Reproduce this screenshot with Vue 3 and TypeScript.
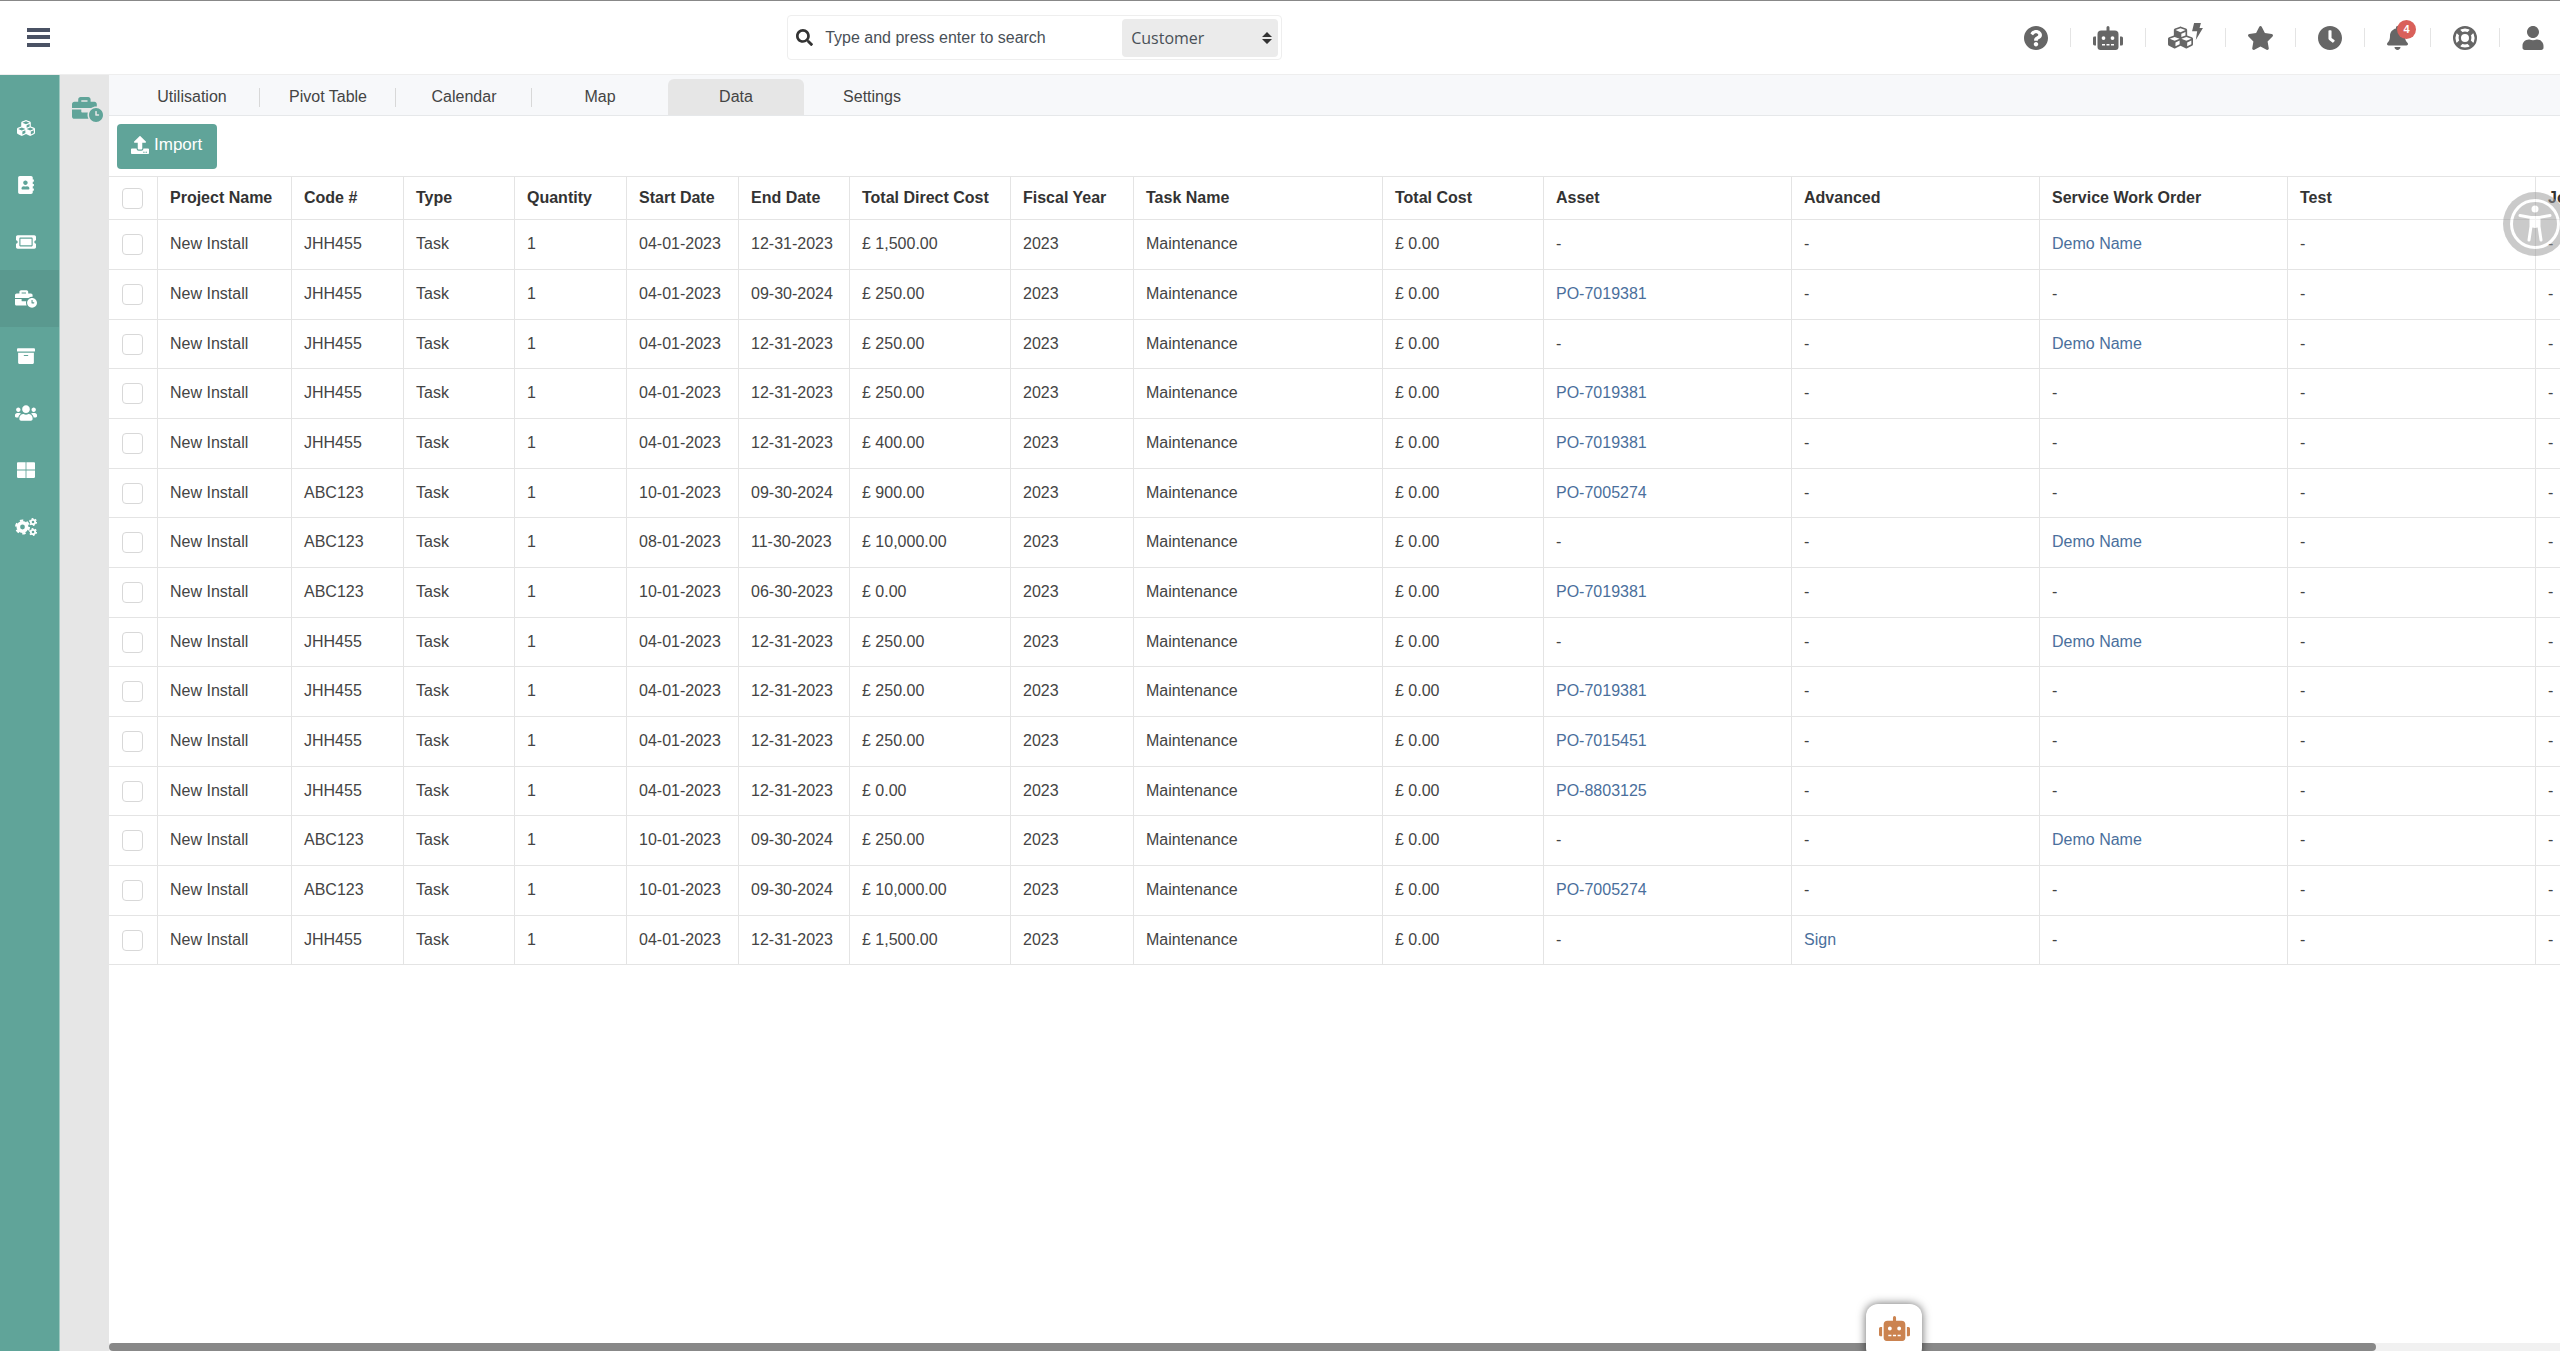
<script setup lang="ts">
import { ref } from 'vue'

interface Glyph {
  box: string
  d: string
}

interface Action {
  label: string
  icon: string
  width: number
  extra?: string
  badge?: number
}

interface Column {
  title: string
  width: number
}

interface Row {
  code: string
  start: string
  end: string
  direct: string
  asset?: string
  advanced?: string
  order?: string
}

const glyphs: Record<string, Glyph> = {
  help: {
    box: '8 8 496 496',
    d: 'M504 256c0 136.997-111.043 248-248 248S8 392.997 8 256C8 119.083 119.043 8 256 8s248 111.083 248 248zM262.655 90c-54.497 0-89.255 22.957-116.549 63.758-3.536 5.286-2.353 12.415 2.715 16.258l34.699 26.31c5.205 3.947 12.621 3.008 16.665-2.122 17.864-22.658 30.113-35.797 57.303-35.797 20.429 0 45.698 13.148 45.698 32.958 0 14.976-12.363 22.667-32.534 33.976C247.128 238.528 216 254.941 216 296v4c0 6.627 5.373 12 12 12h56c6.627 0 12-5.373 12-12v-1.333c0-28.462 83.186-29.647 83.186-106.667 0-58.002-60.165-102-116.531-102zM256 338c-25.365 0-46 20.635-46 46 0 25.364 20.635 46 46 46s46-20.636 46-46c0-25.365-20.635-46-46-46z',
  },
  robot: {
    box: '0 0 640 512',
    d: 'M32,224H64V416H32A31.96166,31.96166,0,0,1,0,384V256A31.96166,31.96166,0,0,1,32,224Zm512-48V448a64.06328,64.06328,0,0,1-64,64H160a64.06328,64.06328,0,0,1-64-64V176a79.974,79.974,0,0,1,80-80H288V32a32,32,0,0,1,64,0V96H464A79.974,79.974,0,0,1,544,176ZM264,256a40,40,0,1,0-40,40A39.997,39.997,0,0,0,264,256Zm-8,128H192v32h64Zm96,0H288v32h64ZM456,256a40,40,0,1,0-40,40A39.997,39.997,0,0,0,456,256Zm-8,128H384v32h64ZM640,256V384a31.96166,31.96166,0,0,1-32,32H576V224h32A31.96166,31.96166,0,0,1,640,256Z',
  },
  cubes: {
    box: '0 0 512 512',
    d: 'M488.6 250.2L392 214V105.5c0-15-9.3-28.4-23.4-33.7l-100-37.5c-8.1-3.1-17.1-3.1-25.3 0l-100 37.5c-14.1 5.3-23.4 18.7-23.4 33.7V214l-96.6 36.2C9.3 255.5 0 268.9 0 283.9V394c0 13.6 7.7 26.1 19.9 32.2l100 50c10.1 5.1 22.1 5.1 32.2 0l103.9-52 103.9 52c10.1 5.1 22.1 5.1 32.2 0l100-50c12.2-6.1 19.9-18.6 19.9-32.2V283.9c0-15-9.3-28.4-23.4-33.7zM358 214.8l-85 31.9v-68.2l85-37v73.3zM154 104.1l102-38.2 102 38.2v.6l-102 41.4-102-41.4v-.6zm84 291.1l-85 42.5v-79.1l85-38.8v75.4zm0-112l-102 41.4-102-41.4v-.6l102-38.2 102 38.2v.6zm240 112l-85 42.5v-79.1l85-38.8v75.4zm0-112l-102 41.4-102-41.4v-.6l102-38.2 102 38.2v.6z',
  },
  bolt: {
    box: '0 0 32 50',
    d: 'M6 0h20l-4 15h10L11 50l4-26H0z',
  },
  star: {
    box: '20 0 536 512',
    d: 'M259.3 17.8L194 150.2 47.9 171.5c-26.2 3.8-36.7 36.1-17.7 54.6l105.7 103-25 145.5c-4.5 26.3 23.2 46 46.4 33.7L288 439.6l130.7 68.7c23.2 12.2 50.9-7.4 46.4-33.7l-25-145.5 105.7-103c19-18.5 8.5-50.8-17.7-54.6L382 150.2 316.7 17.8c-11.7-23.6-45.6-23.9-57.4 0z',
  },
  clock: {
    box: '8 8 496 496',
    d: 'M256,8C119,8,8,119,8,256S119,504,256,504,504,393,504,256,393,8,256,8Zm92.49,313h0l-20,25a16,16,0,0,1-22.49,2.5h0l-67-49.72a40,40,0,0,1-15-31.23V112a16,16,0,0,1,16-16h32a16,16,0,0,1,16,16V256l58,42.5A16,16,0,0,1,348.49,321Z',
  },
  bell: {
    box: '0 0 448 512',
    d: 'M224 512c35.32 0 63.97-28.65 63.97-64H160.03c0 35.35 28.65 64 63.97 64zm215.39-149.71c-19.32-20.76-55.47-51.99-55.47-154.29 0-77.7-54.48-139.9-127.94-155.16V32c0-17.67-14.32-32-31.98-32s-31.98 14.33-31.98 32v20.84C118.56 68.1 64.08 130.3 64.08 208c0 102.3-36.15 133.53-55.47 154.29-6 6.45-8.66 14.16-8.61 21.71.11 16.4 12.98 32 32.1 32h383.8c19.12 0 32-15.6 32.1-32 .05-7.55-2.61-15.27-8.61-21.71z',
  },
  user: {
    box: '0 0 448 512',
    d: 'M224 256c70.7 0 128-57.3 128-128S294.7 0 224 0 96 57.3 96 128s57.3 128 128 128zm89.6 32h-16.7c-22.2 10.2-46.9 16-72.9 16s-50.6-5.8-72.9-16h-16.7C60.2 288 0 348.2 0 422.4V464c0 26.5 21.5 48 48 48h352c26.5 0 48-21.5 48-48v-41.6c0-74.2-60.2-134.4-134.4-134.4z',
  },
  search: {
    box: '0 0 512 512',
    d: 'M505 442.7L405.3 343c-4.5-4.5-10.6-7-17-7H372c27.6-35.3 44-79.7 44-128C416 93.1 322.9 0 208 0S0 93.1 0 208s93.1 208 208 208c48.3 0 92.7-16.4 128-44v16.3c0 6.4 2.5 12.5 7 17l99.7 99.7c9.4 9.4 24.6 9.4 33.9 0l28.3-28.3c9.4-9.4 9.4-24.6.1-34zM208 336c-70.7 0-128-57.2-128-128 0-70.7 57.2-128 128-128 70.7 0 128 57.2 128 128 0 70.7-57.2 128-128 128z',
  },
  contacts: {
    box: '0 0 448 512',
    d: 'M436 160c6.6 0 12-5.4 12-12v-40c0-6.6-5.4-12-12-12h-20V48c0-26.5-21.5-48-48-48H48C21.5 0 0 21.5 0 48v416c0 26.5 21.5 48 48 48h320c26.5 0 48-21.5 48-48v-48h20c6.6 0 12-5.4 12-12v-40c0-6.6-5.4-12-12-12h-20v-64h20c6.6 0 12-5.4 12-12v-40c0-6.6-5.4-12-12-12h-20v-64h20zm-228-32c35.3 0 64 28.7 64 64s-28.7 64-64 64-64-28.7-64-64 28.7-64 64-64zm112 236.8c0 10.6-10 19.2-22.4 19.2H118.4C106 384 96 375.4 96 364.8v-19.2c0-31.8 30.1-57.6 67.2-57.6h5c12.3 5.1 25.7 8 39.8 8s27.6-2.9 39.8-8h5c37.1 0 67.2 25.8 67.2 57.6v19.2z',
  },
  ticket: {
    box: '0 0 576 512',
    d: 'M128 160h320v192H128V160zm400 96c0 26.51 21.49 48 48 48v96c0 26.51-21.49 48-48 48H48c-26.51 0-48-21.49-48-48v-96c26.51 0 48-21.49 48-48s-21.49-48-48-48v-96c0-26.51 21.49-48 48-48h480c26.51 0 48 21.49 48 48v96c-26.51 0-48 21.49-48 48zm-48-104c0-13.255-10.745-24-24-24H120c-13.255 0-24 10.745-24 24v208c0 13.255 10.745 24 24 24h336c13.255 0 24-10.745 24-24V152z',
  },
  jobs: {
    box: '0 0 640 512',
    d: 'M496 224c-79.59 0-144 64.41-144 144s64.41 144 144 144 144-64.41 144-144-64.41-144-144-144zm64 150.29c0 5.34-4.37 9.71-9.71 9.71h-60.57c-5.34 0-9.71-4.37-9.71-9.71v-76.57c0-5.34 4.37-9.71 9.71-9.71h12.57c5.34 0 9.71 4.37 9.71 9.71V352h38.29c5.34 0 9.71 4.37 9.71 9.71v12.58zM496 192c5.4 0 10.72.33 16 .81V144c0-25.6-22.4-48-48-48h-80V48c0-25.6-22.4-48-48-48H176c-25.6 0-48 22.4-48 48v48H48c-25.6 0-48 22.4-48 48v80h395.12c28.6-20.09 63.35-32 100.88-32zM320 96H192V64h128v32zm6.82 224H208c-8.84 0-16-7.16-16-16v-48H0v144c0 25.6 22.4 48 48 48h291.43C327.1 423.96 320 396.82 320 368c0-16.66 2.48-32.72 6.82-48z',
  },
  archive: {
    box: '0 0 512 512',
    d: 'M32 448c0 17.7 14.3 32 32 32h384c17.7 0 32-14.3 32-32V160H32v288zm160-212c0-6.6 5.4-12 12-12h104c6.6 0 12 5.4 12 12v8c0 6.6-5.4 12-12 12H204c-6.6 0-12-5.4-12-12v-8zM480 32H32C14.3 32 0 46.3 0 64v48c0 8.8 7.2 16 16 16h480c8.8 0 16-7.2 16-16V64c0-17.7-14.3-32-32-32z',
  },
  users: {
    box: '0 0 640 512',
    d: 'M96 224c35.3 0 64-28.7 64-64s-28.7-64-64-64-64 28.7-64 64 28.7 64 64 64zm448 0c35.3 0 64-28.7 64-64s-28.7-64-64-64-64 28.7-64 64 28.7 64 64 64zm32 32h-64c-17.6 0-33.5 7.1-45.1 18.6 40.3 22.1 68.9 62 75.1 109.4h66c17.7 0 32-14.3 32-32v-32c0-35.3-28.7-64-64-64zm-256 0c61.9 0 112-50.1 112-112S381.9 32 320 32 208 82.1 208 144s50.1 112 112 112zm76.8 32h-8.3c-20.8 10-43.9 16-68.5 16s-47.6-6-68.5-16h-8.3C179.6 288 128 339.6 128 403.2V432c0 26.5 21.5 48 48 48h288c26.5 0 48-21.5 48-48v-28.8c0-63.6-51.6-115.2-115.2-115.2zm-223.7-13.4C161.5 263.1 145.6 256 128 256H64c-35.3 0-64 28.7-64 64v32c0 17.7 14.3 32 32 32h65.9c6.3-47.4 34.9-87.3 75.2-109.4z',
  },
  grid: {
    box: '0 0 512 512',
    d: 'M24 32h220v212H0V56c0-13 11-24 24-24zM268 32h220c13 0 24 11 24 24v188H268zM0 268h244v212H24c-13 0-24-11-24-24zM268 268h244v188c0 13-11 24-24 24H268z',
  },
  upload: {
    box: '0 0 512 512',
    d: 'M296 384h-80c-13.3 0-24-10.7-24-24V192h-87.7c-17.8 0-26.7-21.5-14.1-34.1L242.3 5.7c7.5-7.5 19.8-7.5 27.3 0l152.2 152.2c12.6 12.6 3.7 34.1-14.1 34.1H320v168c0 13.3-10.7 24-24 24zm216-8v112c0 13.3-10.7 24-24 24H24c-13.3 0-24-10.7-24-24V376c0-13.3 10.7-24 24-24h136v8c0 30.9 25.1 56 56 56h80c30.9 0 56-25.1 56-56v-8h136c13.3 0 24 10.7 24 24zm-124 88c0-11-9-20-20-20s-20 9-20 20 9 20 20 20 20-9 20-20zm64 0c0-11-9-20-20-20s-20 9-20 20 9 20 20 20 20-9 20-20z',
  },
}

const actions: Action[] = [
  { label: 'Help', icon: 'help', width: 24 },
  { label: 'Assistant', icon: 'robot', width: 30 },
  { label: 'Quick stock', icon: 'cubes', width: 25, extra: 'bolt' },
  { label: 'Favourites', icon: 'star', width: 25 },
  { label: 'Recent', icon: 'clock', width: 24 },
  { label: 'Notifications', icon: 'bell', width: 21, badge: 4 },
  { label: 'Support', icon: 'ring', width: 24 },
  { label: 'Account', icon: 'user', width: 22 },
]

const sections = [
  { label: 'Stock', icon: 'cubes', width: 18 },
  { label: 'Contacts', icon: 'contacts', width: 16 },
  { label: 'Tickets', icon: 'ticket', width: 20 },
  { label: 'Jobs', icon: 'jobs', width: 22 },
  { label: 'Archive', icon: 'archive', width: 18 },
  { label: 'People', icon: 'users', width: 22 },
  { label: 'Dashboards', icon: 'grid', width: 18 },
  { label: 'Settings', icon: 'cogs', width: 22 },
]
const activeSection = 'Jobs'

const tabs = ['Utilisation', 'Pivot Table', 'Calendar', 'Map', 'Data', 'Settings']
const activeTab = ref('Data')
const scope = ref('Customer')

const columns: Column[] = [
  { title: 'Project Name', width: 134 },
  { title: 'Code #', width: 112 },
  { title: 'Type', width: 111 },
  { title: 'Quantity', width: 112 },
  { title: 'Start Date', width: 112 },
  { title: 'End Date', width: 111 },
  { title: 'Total Direct Cost', width: 161 },
  { title: 'Fiscal Year', width: 123 },
  { title: 'Task Name', width: 249 },
  { title: 'Total Cost', width: 161 },
  { title: 'Asset', width: 248 },
  { title: 'Advanced', width: 248 },
  { title: 'Service Work Order', width: 248 },
  { title: 'Test', width: 248 },
  { title: 'Job', width: 222 },
]

const rows: Row[] = [
  { code: 'JHH455', start: '04-01-2023', end: '12-31-2023', direct: '1,500.00', order: 'Demo Name' },
  { code: 'JHH455', start: '04-01-2023', end: '09-30-2024', direct: '250.00', asset: 'PO-7019381' },
  { code: 'JHH455', start: '04-01-2023', end: '12-31-2023', direct: '250.00', order: 'Demo Name' },
  { code: 'JHH455', start: '04-01-2023', end: '12-31-2023', direct: '250.00', asset: 'PO-7019381' },
  { code: 'JHH455', start: '04-01-2023', end: '12-31-2023', direct: '400.00', asset: 'PO-7019381' },
  { code: 'ABC123', start: '10-01-2023', end: '09-30-2024', direct: '900.00', asset: 'PO-7005274' },
  { code: 'ABC123', start: '08-01-2023', end: '11-30-2023', direct: '10,000.00', order: 'Demo Name' },
  { code: 'ABC123', start: '10-01-2023', end: '06-30-2023', direct: '0.00', asset: 'PO-7019381' },
  { code: 'JHH455', start: '04-01-2023', end: '12-31-2023', direct: '250.00', order: 'Demo Name' },
  { code: 'JHH455', start: '04-01-2023', end: '12-31-2023', direct: '250.00', asset: 'PO-7019381' },
  { code: 'JHH455', start: '04-01-2023', end: '12-31-2023', direct: '250.00', asset: 'PO-7015451' },
  { code: 'JHH455', start: '04-01-2023', end: '12-31-2023', direct: '0.00', asset: 'PO-8803125' },
  { code: 'ABC123', start: '10-01-2023', end: '09-30-2024', direct: '250.00', order: 'Demo Name' },
  { code: 'ABC123', start: '10-01-2023', end: '09-30-2024', direct: '10,000.00', asset: 'PO-7005274' },
  { code: 'JHH455', start: '04-01-2023', end: '12-31-2023', direct: '1,500.00', advanced: 'Sign' },
]
</script>

<template>
  <div class="app">
    <header class="topbar">
      <button class="menu" type="button" aria-label="Menu">
        <svg width="23" height="19" viewBox="0 0 23 19"><path d="M0 0h23v4H0zM0 7h23v4H0zM0 15h23v4H0z" /></svg>
      </button>
      <form class="search" @submit.prevent>
        <svg class="glass" width="17" height="17" :viewBox="glyphs.search.box"><path :d="glyphs.search.d" /></svg>
        <input type="text" aria-label="Search" placeholder="Type and press enter to search" />
        <div class="scope">
          <select v-model="scope" aria-label="Search in">
            <option>Customer</option>
            <option>Project</option>
            <option>Asset</option>
          </select>
          <svg width="10" height="12" viewBox="0 0 10 12"><path d="M5 0l5 5H0zM5 12L0 7h10z" /></svg>
        </div>
      </form>
      <nav class="actions" aria-label="Tools">
        <button v-for="a in actions" :key="a.label" type="button" :class="a.icon" :aria-label="a.label">
          <svg v-if="a.icon === 'ring'" width="24" height="24" viewBox="0 0 24 24" fill="none" stroke="currentColor">
            <circle cx="12" cy="12" r="10.8" stroke-width="2.4" />
            <circle cx="12" cy="12" r="5.2" stroke-width="2.4" />
            <path d="M4.5 4.5l4 4M19.5 4.5l-4 4M4.5 19.5l4-4M19.5 19.5l-4-4" stroke-width="4.6" />
          </svg>
          <svg v-else :width="a.width" :height="a.icon === 'cubes' ? 25 : 24" :viewBox="glyphs[a.icon].box">
            <path :d="glyphs[a.icon].d" />
          </svg>
          <svg v-if="a.extra" class="extra" width="11" height="17" :viewBox="glyphs[a.extra].box">
            <path :d="glyphs[a.extra].d" />
          </svg>
          <span v-if="a.badge" class="badge">{{ a.badge }}</span>
        </button>
      </nav>
    </header>

    <div class="body">
      <nav class="rail" aria-label="Sections">
        <a v-for="s in sections" :key="s.label" href="#" :class="{ active: s.label === activeSection }" :aria-label="s.label">
          <svg v-if="s.icon === 'cogs'" width="22" height="18" viewBox="0 0 22 18" fill="none" stroke="currentColor">
            <circle cx="7.5" cy="9" r="4.2" stroke-width="3.6" />
            <circle cx="7.5" cy="9" r="6.5" stroke-width="2" stroke-dasharray="3.4 3.407" />
            <circle cx="18" cy="4" r="2.2" stroke-width="1.8" />
            <circle cx="18" cy="4" r="3.4" stroke-width="1.2" stroke-dasharray="1.78 1.78" />
            <circle cx="18" cy="14" r="2.2" stroke-width="1.8" />
            <circle cx="18" cy="14" r="3.4" stroke-width="1.2" stroke-dasharray="1.78 1.78" />
          </svg>
          <svg v-else :width="s.width" height="18" :viewBox="glyphs[s.icon].box"><path :d="glyphs[s.icon].d" /></svg>
        </a>
      </nav>
      <aside class="subrail">
        <a href="#" aria-label="Job planning">
          <svg width="31" height="25" :viewBox="glyphs.jobs.box"><path :d="glyphs.jobs.d" /></svg>
        </a>
      </aside>

      <main class="content">
        <nav class="tabs" aria-label="Views">
          <button
            v-for="t in tabs"
            :key="t"
            type="button"
            :class="{ active: t === activeTab }"
            @click="activeTab = t"
          >
            {{ t }}
          </button>
        </nav>
        <div class="toolbar">
          <button class="import" type="button">
            <svg width="18" height="18" :viewBox="glyphs.upload.box"><path :d="glyphs.upload.d" /></svg>
            Import
          </button>
        </div>
        <div class="sheet">
          <table>
            <colgroup>
              <col class="pick" />
              <col v-for="c in columns" :key="c.title" :style="{ width: c.width + 'px' }" />
            </colgroup>
            <thead>
              <tr>
                <th class="pick"><input type="checkbox" aria-label="Select all rows" /></th>
                <th v-for="c in columns" :key="c.title" scope="col">{{ c.title }}</th>
              </tr>
            </thead>
            <tbody>
              <tr v-for="(r, i) in rows" :key="i">
                <td class="pick"><input type="checkbox" :aria-label="'Select row ' + (i + 1)" /></td>
                <td>New Install</td>
                <td>{{ r.code }}</td>
                <td>Task</td>
                <td>1</td>
                <td>{{ r.start }}</td>
                <td>{{ r.end }}</td>
                <td>£ {{ r.direct }}</td>
                <td>2023</td>
                <td>Maintenance</td>
                <td>£ 0.00</td>
                <td><a v-if="r.asset" href="#">{{ r.asset }}</a><template v-else>-</template></td>
                <td><a v-if="r.advanced" href="#">{{ r.advanced }}</a><template v-else>-</template></td>
                <td><a v-if="r.order" href="#">{{ r.order }}</a><template v-else>-</template></td>
                <td>-</td>
                <td>-</td>
              </tr>
            </tbody>
          </table>
        </div>
        <div class="scrollbar"><div class="thumb"></div></div>
      </main>
    </div>

    <button class="access" type="button" aria-label="Accessibility options">
      <svg width="64" height="64" viewBox="0 0 64 64">
        <circle cx="32" cy="32" r="32" fill="#969696" />
        <circle cx="32" cy="32" r="23.5" fill="none" stroke="#fff" stroke-width="3" />
        <circle cx="32" cy="17" r="3.5" fill="#fff" />
        <path d="M17 23.5l11 2v9L26 48M47 23.5l-11 2v9L38 48" fill="none" stroke="#fff" stroke-width="3" stroke-linecap="round" />
        <path d="M27 24h10v11l-5 1-5-1z" fill="#fff" />
      </svg>
    </button>
    <button class="bot" type="button" aria-label="Open assistant">
      <svg width="31" height="25" :viewBox="glyphs.robot.box"><path :d="glyphs.robot.d" /></svg>
    </button>
  </div>
</template>

<style>
body {
  margin: 0;
  overflow: hidden;
}
</style>

<style scoped>
.app {
  display: flex;
  flex-direction: column;
  height: 100vh;
  box-sizing: border-box;
  border-top: 1px solid #888;
  background: #fff;
  color: #444;
  font: 16px/20px 'Liberation Sans', Arial, sans-serif;
  overflow: hidden;
}
svg {
  display: block;
  flex: none;
  fill: currentColor;
}
svg[fill='none'] {
  fill: none;
}
button {
  border: 0;
  padding: 0;
  background: none;
  color: inherit;
  font: inherit;
}
.topbar {
  display: grid;
  grid-template-columns: 30.75% 495px 1fr;
  align-items: center;
  height: 73px;
  flex: none;
  border-bottom: 1px solid #eee;
}
.menu {
  justify-self: start;
  margin-left: 27px;
  color: #4a5264;
}
.search {
  display: flex;
  align-items: center;
  box-sizing: border-box;
  height: 45px;
  margin: 0;
  padding: 0 3px 0 8px;
  border: 1px solid #eee;
  border-radius: 4px;
}
.glass {
  color: #333;
}
.search input {
  flex: 1;
  min-width: 0;
  border: 0;
  padding: 0 12px;
  outline: 0;
  background: none;
  color: #495057;
  font: inherit;
}
.search input::placeholder {
  color: #495057;
  opacity: 1;
}
.scope {
  display: flex;
  align-items: center;
  box-sizing: border-box;
  width: 156px;
  height: 38px;
  padding-right: 6px;
  border-radius: 4px;
  background: #ebebeb;
}
.scope select {
  flex: 1;
  min-width: 0;
  height: 38px;
  border: 0;
  padding: 0 9px;
  appearance: none;
  background: none;
  color: #495057;
  font: 16px/20px 'Open Sans', 'Noto Sans', sans-serif;
}
.scope svg {
  color: #333;
}
.actions {
  display: flex;
  justify-content: flex-end;
  align-items: center;
  padding-right: 16px;
  color: #666;
}
.actions button {
  display: flex;
  align-items: center;
  position: relative;
}
.actions button + button::before {
  content: '';
  width: 1px;
  height: 19px;
  margin: 0 22px;
  background: #e4e4e4;
}
.extra {
  align-self: flex-start;
  margin-left: -1px;
}
.actions .cubes {
  height: 30px;
}
.badge {
  position: absolute;
  right: -8px;
  top: -6px;
  width: 19px;
  height: 19px;
  border-radius: 50%;
  background: #d9605a;
  color: #fff;
  font: bold 11px/19px 'Liberation Sans', Arial, sans-serif;
  text-align: center;
}
.body {
  display: flex;
  flex: 1;
  min-height: 0;
}
.rail {
  display: flex;
  flex-direction: column;
  flex: none;
  box-sizing: border-box;
  width: 60px;
  padding-top: 24px;
  border-right: 1px solid #9ec8c0;
  background: #60a499;
}
.rail a {
  display: flex;
  align-items: center;
  justify-content: center;
  height: 57px;
  padding-right: 7px;
  color: #fff;
}
.rail .active {
  background: #5a998f;
}
.subrail {
  flex: none;
  box-sizing: border-box;
  width: 49px;
  padding: 22px 0 0 12px;
  background: #e6e6e6;
}
.subrail a {
  color: #60a499;
}
.content {
  display: flex;
  flex-direction: column;
  flex: 1;
  min-width: 0;
}
.tabs {
  display: flex;
  align-items: flex-end;
  box-sizing: border-box;
  flex: none;
  height: 41px;
  padding-left: 15px;
  border-bottom: 1px solid #e6e8ea;
  background: #f7f8fa;
}
.tabs button {
  display: flex;
  align-items: center;
  justify-content: center;
  width: 136px;
  height: 36px;
  position: relative;
}
.tabs button:nth-child(-n + 3)::after {
  content: '';
  position: absolute;
  right: 0;
  top: 9px;
  width: 1px;
  height: 19px;
  background: #d8d8d8;
}
.tabs .active {
  border-radius: 6px 6px 0 0;
  background: #e6e6e6;
}
.toolbar {
  flex: none;
  padding: 8px 8px 7px;
}
.import {
  display: flex;
  align-items: center;
  gap: 5px;
  box-sizing: border-box;
  height: 45px;
  padding: 0 15px 3px 14px;
  border-radius: 4px;
  background: #60a499;
  color: #fff;
  font-size: 17px;
}
.sheet {
  flex: 1;
  min-height: 0;
  overflow: hidden;
}
table {
  width: 2649px;
  table-layout: fixed;
  border-collapse: separate;
  border-spacing: 0;
  border-top: 1px solid #e4e4e4;
}
.pick {
  width: 49px;
}
th,
td {
  box-sizing: border-box;
  height: 50px;
  padding: 0 12px 1px;
  border-right: 1px solid #e4e4e4;
  border-bottom: 1px solid #e4e4e4;
  text-align: left;
  white-space: nowrap;
}
th {
  height: 43px;
  padding-bottom: 0;
  color: #333;
}
tbody tr:nth-child(3n) td {
  height: 49px;
}
th.pick,
td.pick {
  padding: 0 13px;
}
.pick input {
  display: block;
  box-sizing: border-box;
  width: 21px;
  height: 21px;
  margin: 0;
  appearance: none;
  border: 1px solid #d8d8d8;
  border-radius: 4px;
  background: #fff;
}
td a {
  color: #4a6f9c;
  text-decoration: none;
}
.scrollbar {
  flex: none;
  height: 8px;
  background: #f1f1f1;
}
.thumb {
  width: 92.5%;
  height: 8px;
  border-radius: 4px;
  background: #888;
}
.access {
  position: absolute;
  top: 192px;
  right: -7px;
  opacity: 0.5;
}
.bot {
  display: flex;
  justify-content: center;
  box-sizing: border-box;
  position: absolute;
  left: 1866px;
  bottom: -9px;
  width: 56px;
  height: 56px;
  padding-top: 12px;
  border-radius: 12px;
  background: #fff;
  box-shadow: 0 0 10px rgba(0, 0, 0, 0.6);
  color: #cb8350;
}
</style>
